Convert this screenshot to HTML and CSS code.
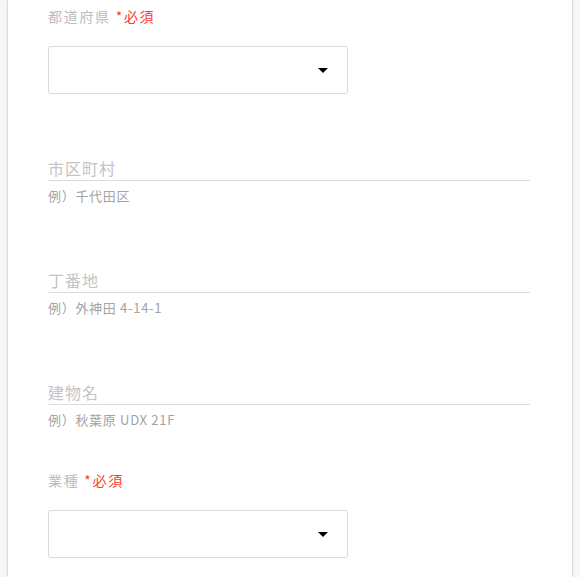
FILE: index.html
```html
<!DOCTYPE html>
<html lang="ja">
<head>
<meta charset="utf-8">
<link rel="stylesheet" href="styles.css">
</head>
<body>
<div class="panel">
  <div class="label">都道府県 <span class="req">*必須</span></div>
  <div class="select select-first"><span class="arrow"></span></div>

  <div class="field field-first">
    <div class="input">市区町村</div>
    <div class="hint">例）千代田区</div>
  </div>
  <div class="field">
    <div class="input">丁番地</div>
    <div class="hint">例）外神田 4-14-1</div>
  </div>
  <div class="field">
    <div class="input">建物名</div>
    <div class="hint">例）秋葉原 UDX 21F</div>
  </div>

  <div class="label label-second">業種 <span class="req">*必須</span></div>
  <div class="select select-second"><span class="arrow"></span></div>
</div>
</body>
</html>
```

FILE: styles.css
```css
html, body {
  margin: 0;
  padding: 0;
  background: #f7f7f7;
  height: 100%;
  overflow: hidden;
}
body {
  font-family: "Noto Sans CJK JP", "Noto Sans", sans-serif;
}
.panel {
  margin: 0 8px;
  background: #fff;
  box-shadow: 0 0 2px rgba(0, 0, 0, 0.35);
  padding: 6px 42px 0 40px;
  height: 100%;
  box-sizing: border-box;
}
.label {
  font-size: 14px;
  line-height: 20px;
  color: #bdbdbd;
  letter-spacing: 1.7px;
}
.req {
  color: #ff3b30;
}
.label-second {
  margin-top: 41px;
}
.select {
  width: 300px;
  height: 48px;
  box-sizing: border-box;
  border: 1px solid #dcdcdc;
  border-radius: 2px;
  display: flex;
  align-items: center;
  justify-content: flex-end;
  padding-right: 19px;
}
.select-first { margin-top: 20px; }
.select-second { margin-top: 20px; }
.arrow {
  width: 0;
  height: 0;
  border-left: 5px solid transparent;
  border-right: 5px solid transparent;
  border-top: 5px solid #000;
}
.field { margin-top: 64px; }
.field-first { margin-top: 63px; }
.input {
  height: 24px;
  box-sizing: border-box;
  border-bottom: 1px solid #dcdcdc;
  font-size: 16px;
  line-height: 23px;
  color: #c4c4c4;
  letter-spacing: 1px;
}
.hint {
  margin-top: 6px;
  font-size: 13px;
  line-height: 18px;
  color: #a3a3a3;
  font-weight: 400;
  letter-spacing: 0.7px;
}
```
